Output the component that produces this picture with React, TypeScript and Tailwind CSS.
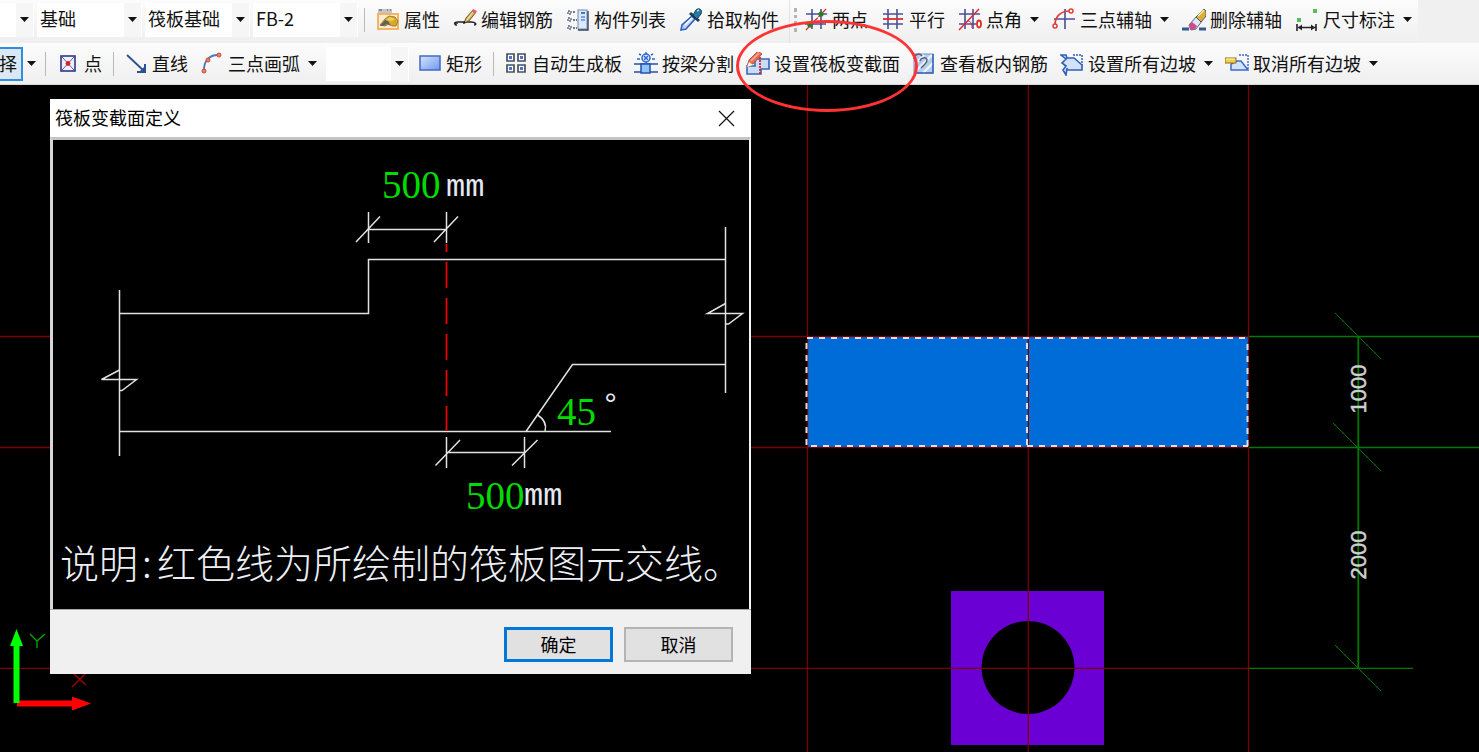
import React from 'react';

const ink = '#4a4f96';

const icons: Record<string, React.ReactNode> = {
    property: (
        <>
            <rect x="2" y="1" width="14" height="4" fill="#c4c6cc" />
            <path d="M3 2h3M11 2h1M14 2h1" stroke="#6c7078" strokeWidth="1.5" />
            <rect x="2" y="6" width="20" height="15" fill="#fdebcf" stroke="#f3b467" strokeWidth="2" />
            <path d="M4 17l5-6 4-3 6 1 3 4-2 5h-4l-3-2-4 2z" fill="#d9a62e" stroke="#8a6d24" strokeWidth=".8" />
            <path d="M4 18l5-6 3 1 3 5-4-2-4 2z" fill="#59645c" />
            <path d="M10 12l4-3 5 2-3 2z" fill="#f2cf55" />
        </>
    ),
    pencil: (
        <>
            <path d="M1 15h4M4 17c-3 0-3-3 1-3h13c5 0 6 3 3 3" fill="none" stroke="#222" strokeWidth="1.6" />
            <path d="M11 15l2-5 7-8 3 2-7 9z" fill="#d9b75a" stroke="#5d4a28" strokeWidth=".9" />
            <path d="M18 4l2-3 4 2-2 3z" fill="#d8685c" />
            <path d="M14 12l6-8" stroke="#f8e9a8" />
            <path d="M10 16l1-3 2 2z" fill="#111" />
        </>
    ),
    list: (
        <>
            <path d="M2 3h3v3H2zM2 10h3v3H2zM2 18h3v3H2z" fill="#fff" stroke="#5a6880" strokeWidth="1.4" strokeDasharray="2 1" />
            <path d="M7 4h2M7 12h4M7 20h4" stroke="#3d4d6a" strokeWidth="1.5" strokeDasharray="2 1" />
            <rect x="12" y="2" width="9" height="19" fill="#dce8fb" stroke="#7788aa" />
            <path d="M22 3v19H12" fill="none" stroke="#33425f" strokeWidth="1.4" />
            <path d="M15 5h4" stroke="#3a78d8" strokeWidth="2" />
            <path d="M15 9h4M15 12h4" stroke="#5a8ae0" strokeWidth="1.4" />
        </>
    ),
    picker: (
        <>
            <path d="M2 22l1-5 10-9 3 3-9 10z" fill="#b9d2fa" stroke="#335ebd" strokeWidth="1.6" />
            <path d="M6 17l7-7" stroke="#fff" strokeWidth="1.5" />
            <path d="M11 5l9 8" stroke="#183b57" strokeWidth="3" />
            <path d="M14 7l3-5c3-3 7 0 5 4l-4 5z" fill="#287aa0" stroke="#153e5b" />
            <path d="M18 3l2-1" stroke="#a3e0ee" strokeWidth="1.5" />
        </>
    ),
    twoPoint: (
        <>
            <path d="M8 1v20M17 1v20M2 6h21M1 16h21" stroke={ink} strokeWidth="1.6" />
            <path d="M2 22L22 1" stroke="#e03028" strokeWidth="1.3" strokeDasharray="5 1" />
            <circle cx="17" cy="6" r="2.6" fill="#2f7d1d" />
            <circle cx="6" cy="17" r="2.6" fill="#2f7d1d" />
        </>
    ),
    parallel: (
        <>
            <path d="M7 1v20M16 1v20M2 6h20M2 16h20" stroke={ink} strokeWidth="1.6" />
            <path d="M2 11h20" stroke="#e22a2a" strokeWidth="1.8" />
        </>
    ),
    pointAngle: (
        <>
            <path d="M7 1v20M15 1v20M1 6h21M1 16h17" stroke={ink} strokeWidth="1.6" />
            <path d="M1 22L21 1" stroke="#e22a2a" strokeWidth="1.5" />
            <path d="M10 13c3 0 4 3 4 7" fill="none" stroke="#e22a2a" />
            <ellipse cx="21" cy="16" rx="2" ry="3.5" fill="#fff" stroke="#e22a2a" strokeWidth="1.8" />
        </>
    ),
    arcAxis: (
        <>
            <path d="M13 1v20M2 11h21" stroke={ink} strokeWidth="1.6" />
            <path d="M3 17C3 8 9 3 18 3" fill="none" stroke="#e33c38" strokeWidth="1.7" />
            <circle cx="3" cy="18" r="2" fill="#fff" stroke="#e33c38" strokeWidth="1.5" />
            <circle cx="19" cy="3" r="2" fill="#fff" stroke="#e33c38" strokeWidth="1.5" />
        </>
    ),
    eraser: (
        <>
            <path d="M0 21h7M17 21h7" stroke="#315a93" strokeWidth="3" />
            <path d="M7 17l7-8 6 4-6 8-5 1z" fill="#dfe5f1" stroke="#59657f" />
            <path d="M7 17l3-3 5 4-2 3-5 1z" fill="#cf4c8c" />
            <path d="M14 9l8-8 2 2v5l-5 6z" fill="#e0ae34" stroke="#4c5778" />
            <path d="M16 8l6-6" stroke="#fff2a0" strokeWidth="1.5" />
        </>
    ),
    dimension: (
        <>
            <rect x="2" y="10" width="4" height="4" fill="#57bd58" />
            <rect x="18" y="1" width="4" height="4" fill="#57bd58" />
            <path d="M2 16v7M21 16v7M3 19.5h18" stroke="#222" strokeWidth="1.6" />
            <path d="M3 19.5l4-3v6zM20 19.5l-4-3v6z" fill="#222" />
        </>
    ),
    point: (
        <>
            <rect x="5" y="4" width="14" height="15" fill="#eef1ff" stroke="#34348c" strokeWidth="1.6" />
            <path d="M6 5l12 13M18 5L6 18" stroke="#5c62a8" />
            <circle cx="12" cy="11.5" r="2.4" fill="#e02020" />
        </>
    ),
    line: (
        <>
            <path d="M3 3l17 16" stroke="#2c5090" strokeWidth="1.8" />
            <path d="M21 12v8h-8" fill="none" stroke="#2c5090" strokeWidth="2" />
            <path d="M21 20l-5-1 4-4z" fill="#2c5090" />
        </>
    ),
    arc: (
        <>
            <path d="M4 18C4 9 9 3 18 3" fill="none" stroke="#4c7bb5" strokeWidth="1.8" />
            <circle cx="4" cy="19" r="2" fill="#e98068" stroke="#d04a35" />
            <circle cx="8" cy="8" r="2" fill="#e98068" stroke="#d04a35" />
            <circle cx="19" cy="3" r="2" fill="#e98068" stroke="#d04a35" />
        </>
    ),
    rectangle: (
        <>
            <defs>
                <linearGradient id="rectFill" x1="0" y1="0" x2="1" y2="1">
                    <stop offset="0" stopColor="#d6e4ff" />
                    <stop offset="1" stopColor="#6f98ee" />
                </linearGradient>
            </defs>
            <rect x="2" y="4" width="20" height="14" fill="url(#rectFill)" stroke="#4468c4" strokeWidth="1.5" />
        </>
    ),
    autoSlab: (
        <>
            <path d="M3 2h7v7H3zM14 2h7v7h-7zM3 13h7v7H3zM14 13h7v7h-7z" fill="#fff" stroke="#48505c" strokeWidth="1.7" />
            <path d="M5 4h3v3H5zM16 4h3v3h-3zM5 15h3v3H5zM16 15h3v3h-3z" fill="#3f75dc" />
        </>
    ),
    splitBeam: (
        <>
            <path d="M0 12h24M0 20h24" stroke="#274fa8" strokeWidth="1.7" />
            <rect x="7" y="12" width="9" height="9" fill="#8cc6f8" stroke="#274fa8" strokeWidth="1.5" />
            <circle cx="12" cy="6" r="4" fill="#dbe8ff" stroke="#3164c9" strokeWidth="1.5" />
            <path d="M12 0v2M5 2l2 1M19 2l-2 1M3 7h3M18 7h3M12 10v2M10 4l4 4M14 4l-4 4" stroke="#3164c9" strokeWidth="1.4" />
        </>
    ),
    section: (
        <>
            <path d="M1 14h8V7h14v10h-8v5H1z" fill="#cbdcf9" stroke="#3a66b8" strokeWidth="1.6" />
            <path d="M14 5v18" stroke="#e12222" strokeWidth="1.8" strokeDasharray="2 1" />
            <path d="M1 14l2-6 9-9 4 3-9 10z" fill="#e46e53" stroke="#b8432e" strokeWidth=".8" />
            <path d="M5 9l8-8" stroke="#f5b09a" strokeWidth="1.5" />
            <path d="M1 15l2-5 4 3z" fill="#fff3df" />
        </>
    ),
    viewRebar: (
        <>
            <rect x="2" y="2" width="19" height="19" fill="#b5ccf3" stroke="#7391c9" />
            <path d="M3 12L12 3M3 20L20 3M11 21l10-10" stroke="#eef4ff" strokeWidth="2.4" />
            <path d="M2 7c0-4 5-7 8-3M8 9c1-4 7-4 7-1s-3 5-6 8" fill="none" stroke="#5a6272" strokeWidth="1.5" />
            <path d="M21 2v19H2" fill="none" stroke="#3661b5" strokeWidth="1.5" />
        </>
    ),
    slope: (
        <>
            <path d="M1 3h5l1 3h7l8 7v5H7v-2l-1 7-3-5 3-4-4-3 4-4z" fill="#d3e2fb" stroke="#2f5fb8" strokeWidth="1.6" />
            <path d="M13 3h9v10" fill="none" stroke="#2f5fb8" strokeWidth="1.5" strokeDasharray="2 1" />
        </>
    ),
    cancelSlope: (
        <>
            <path d="M6 12v6h17l-7-9h-4z" fill="#d3e2fb" stroke="#3a6bca" strokeWidth="1.5" />
            <path d="M14 3h9v14" fill="none" stroke="#3a6bca" strokeWidth="1.4" strokeDasharray="2 1" />
            <rect x="0" y="6" width="11" height="5" fill="#f3cf47" stroke="#92711d" />
            <path d="M1 7h9" stroke="#fff3b0" />
        </>
    ),
};

const Arrow: React.FC<{ className?: string }> = ({ className }) => (
    <svg className={className} width="9" height="5" viewBox="0 0 9 5" aria-hidden="true">
        <path d="M0 0h9L4.5 5z" fill="#111" />
    </svg>
);

interface ToolProps {
    icon: string;
    label: string;
    menu?: boolean;
    marked?: boolean;
}

const Tool: React.FC<ToolProps> = ({ icon, label, menu, marked }) => (
    <button type="button" className="relative flex h-8 shrink-0 items-center gap-1 px-1.5 whitespace-nowrap">
        <svg className="h-6 w-6 shrink-0" viewBox="0 0 24 24" aria-hidden="true">
            {icons[icon]}
        </svg>
        <span className="pb-0.5">{label}</span>
        {menu && <Arrow className="ml-1" />}
        {/* Ring round the highlighted command */}
        {marked && (
            <span className="pointer-events-none absolute -top-7 -right-3 -bottom-8 -left-1 z-10 rounded-[50%] border-3 border-[#ff3333]" />
        )}
    </button>
);

interface ComboProps {
    label: string;
    value?: string;
    className: string;
}

const Combo: React.FC<ComboProps> = ({ label, value = '', className }) => (
    <div className={`relative flex h-[34px] shrink-0 bg-white ${className}`}>
        <select aria-label={label} className="w-full appearance-none bg-transparent pb-1 pl-[3px] outline-none">
            <option>{value}</option>
        </select>
        <span className="pointer-events-none absolute inset-y-0 right-0 flex w-[18px] items-center justify-center border-r border-white bg-[#f6f6f6]">
            <Arrow />
        </span>
    </div>
);

const Separator = () => <div className="mr-1 ml-[5px] h-6 w-px shrink-0 bg-[#b9b9b9]" />;

const Toolbars = () => (
    <header className="relative z-10 bg-[#f0f0f0]">
        <div className="flex h-[43px]">
            <div className="flex items-center gap-px bg-linear-to-b from-[#fcfcfc] to-[#efefef] pr-1 pb-1">
                <div className="flex gap-[3px]">
                    <Combo label="楼层" className="w-[34px]" />
                    <Combo label="构件类型" value="基础" className="w-[105px]" />
                    <Combo label="构件" value="筏板基础" className="w-[105px]" />
                    <Combo label="名称" value="FB-2" className="w-[105px]" />
                </div>
                <Separator />
                <Tool icon="property" label="属性" />
                <Tool icon="pencil" label="编辑钢筋" />
                <Tool icon="list" label="构件列表" />
                <Tool icon="picker" label="拾取构件" />
            </div>
            <div className="flex items-center gap-px border-l border-[#e4e4e4] bg-linear-to-b from-[#fcfcfc] to-[#efefef] pb-1">
                <div className="ml-1 h-6 w-[3px] border-l-3 border-dotted border-[#b4b4b4]" />
                <Tool icon="twoPoint" label="两点" />
                <Tool icon="parallel" label="平行" />
                <Tool icon="pointAngle" label="点角" menu />
                <Tool icon="arcAxis" label="三点辅轴" menu />
                <Tool icon="eraser" label="删除辅轴" />
                <Tool icon="dimension" label="尺寸标注" menu />
            </div>
        </div>
        <div className="flex h-[42px] items-center border-b border-[#d8d8d8] bg-linear-to-b from-[#fcfcfc] to-[#efefef]">
            <button
                type="button"
                className="flex h-[34px] w-[23px] shrink-0 items-center justify-end border-2 border-l-0 border-[#2f8ee0] bg-[#dbe8f4] pr-1 pb-0.5"
            >
                择
            </button>
            <button type="button" aria-label="更多选择" className="flex h-8 w-[17px] items-center justify-center">
                <Arrow />
            </button>
            <Separator />
            <Tool icon="point" label="点" />
            <Separator />
            <Tool icon="line" label="直线" />
            <Tool icon="arc" label="三点画弧" menu />
            <Combo label="画法" className="mx-[3px] w-[83px]" />
            <Tool icon="rectangle" label="矩形" />
            <Separator />
            <Tool icon="autoSlab" label="自动生成板" />
            <Tool icon="splitBeam" label="按梁分割" />
            <Tool icon="section" label="设置筏板变截面" marked />
            <Tool icon="viewRebar" label="查看板内钢筋" />
            <Tool icon="slope" label="设置所有边坡" menu />
            <Tool icon="cancelSlope" label="取消所有边坡" menu />
        </div>
    </header>
);

// Plan view: slab, column cap, axis grid and dimension chain
const Plan = () => (
    <svg className="absolute inset-0 h-full w-full" aria-label="平面图">
        <rect x="808" y="252" width="440" height="110" fill="#006cd8" />
        <path d="M951 506h153v154H951zM1028 536a46.5 46.5 0 1 0 .1 0z" fill="#6a00d4" fillRule="evenodd" />
        <g stroke="#780000" strokeWidth="1.3">
            <line x1="807.5" y1="0" x2="807.5" y2="100%" />
            <line x1="1028.3" y1="0" x2="1028.3" y2="100%" />
            <line x1="1248.5" y1="0" x2="1248.5" y2="100%" />
            <line x1="0" y1="251.5" x2="1248" y2="251.5" />
            <line x1="0" y1="362.5" x2="1248" y2="362.5" />
            <line x1="0" y1="583.3" x2="1248" y2="583.3" />
        </g>
        <g fill="none" stroke="#dcdfe6" strokeWidth="2" strokeDasharray="6 6">
            <path d="M807 253H1248" />
            <path d="M811 361H1248" />
            <path d="M806.5 258V361" />
            <path d="M1027 258V361" />
            <path d="M1247.5 259V361" />
        </g>
        <g stroke="#007a00" strokeWidth="1.3">
            <line x1="1249" y1="251.5" x2="100%" y2="251.5" />
            <line x1="1249" y1="362.5" x2="100%" y2="362.5" />
            <line x1="1249" y1="583.3" x2="1413" y2="583.3" />
            <line x1="1358.3" y1="251" x2="1358.3" y2="583" strokeWidth="1.8" />
            <path d="M1335 228l46 46M1333 338l48 48M1335 560l46 46" strokeWidth="1" />
        </g>
        <g
            fill="#cfcfcf"
            stroke="#cfcfcf"
            strokeWidth=".5"
            textAnchor="middle"
            className="font-['Liberation_Sans',sans-serif] text-[22px]"
        >
            <text transform="translate(1366 304) rotate(-90)">1000</text>
            <text transform="translate(1366 470) rotate(-90)">2000</text>
        </g>
    </svg>
);

const AxisMarker = () => (
    <svg className="absolute bottom-0 left-0" width="100" height="130" viewBox="0 622 100 130" aria-label="坐标系">
        <path d="M17 700.5h55v-4l19 7-19 7v-4H17z" fill="#f00" />
        <path d="M13.5 703V646H10l6.5-17 6.5 17h-3.500v57z" fill="#0f0" />
        <path d="M30 634l7 7 8-7M37 641v7" fill="none" stroke="#00a800" strokeWidth="1.3" />
        <path d="M73 673l13 12M86 673l-14 14" stroke="#a80000" strokeWidth="1.3" />
    </svg>
);

const SectionDrawing = () => (
    <svg className="block h-[469px] w-full bg-black" viewBox="53 140 696 469" aria-label="筏板变截面示意">
        <g fill="none" stroke="#e2e2e2" strokeWidth="1.5">
            <path d="M119.5 290V456M119.5 313.5H368.5V259.5H725.5" />
            <path d="M119.5 431.5H611M725.5 227V393M725.5 364.5H572.5L526 431.5" />
            <path d="M368.5 212V243M446.5 212V243M368.5 229.5H446.5M356 242L380 216.5M434 242L458 216.5" />
            <path d="M446.5 437V468M524.5 437V468M446.5 452.5H524.5M435.5 465.5L460 440M512 465.5L537.5 440" />
            <path d="M119.5 370L101.5 379.5H136.5L122 390.5H119.5" />
            <path d="M725.5 303.5L707.5 313.5H742.5L728.5 324H725.5" />
            <path d="M537 414.5C544 419 547 424 545 431" />
        </g>
        <path d="M446.5 244V431" stroke="#e80000" strokeWidth="1.8" strokeDasharray="26 10" strokeDashoffset="18" />
        <g fill="#00dc00" className="font-['Liberation_Serif',serif] text-[39px]">
            <text x="382" y="198">500</text>
            <text x="466" y="509">500</text>
            <text x="557" y="425">45</text>
        </g>
        <g fill="#e4e8f0" className="font-['Liberation_Mono',monospace] text-[32px]">
            <text x="446" y="196">mm</text>
            <text x="524" y="505">mm</text>
            <text x="601" y="414">°</text>
        </g>
        <text y="578" fill="#eceff4" className="font-['Noto_Sans_CJK_SC',sans-serif] text-[39px] font-light">
            <tspan x="60">说明</tspan>
            <tspan x="142">:</tspan>
            <tspan x="157">红色线为所绘制的筏板图元交线。</tspan>
        </text>
    </svg>
);

const SectionDialog = () => (
    <section
        role="dialog"
        aria-labelledby="section-title"
        className="absolute top-[14px] left-[50px] w-[701px] bg-[#f0f0f0] text-black"
    >
        <div className="flex h-[38px] items-center justify-between bg-white pr-4 pl-[5px]">
            <h1 id="section-title" className="pb-0.5">
                筏板变截面定义
            </h1>
            <button type="button" aria-label="关闭">
                <svg width="17" height="17" viewBox="0 0 17 17">
                    <path d="M1 1l15 15M16 1L1 16" stroke="#111" strokeWidth="1.2" />
                </svg>
            </button>
        </div>
        <div className="border-t-3 border-r-2 border-l-3 border-t-[#c4c4c4] border-r-[#f4f4f4] border-l-[#d6d6d6]">
            <SectionDrawing />
        </div>
        <div className="flex justify-end gap-[11px] border-t border-[#a8a8a8] pt-[17px] pr-[18px] pb-3">
            <button type="button" className="h-[35px] w-[109px] border-3 border-[#0078d7] bg-[#e1e1e1] pb-0.5">
                确定
            </button>
            <button type="button" className="h-[35px] w-[109px] border-2 border-[#b4b4b4] bg-[#e1e1e1] pb-0.5">
                取消
            </button>
        </div>
    </section>
);

const App: React.FC = () => (
    <div className="flex min-h-screen flex-col overflow-x-clip bg-black font-['Noto_Sans_CJK_SC',sans-serif] text-lg leading-6 text-[#111]">
        <Toolbars />
        <main className="relative flex-1">
            <Plan />
            <AxisMarker />
            <SectionDialog />
        </main>
    </div>
);

export default App;
